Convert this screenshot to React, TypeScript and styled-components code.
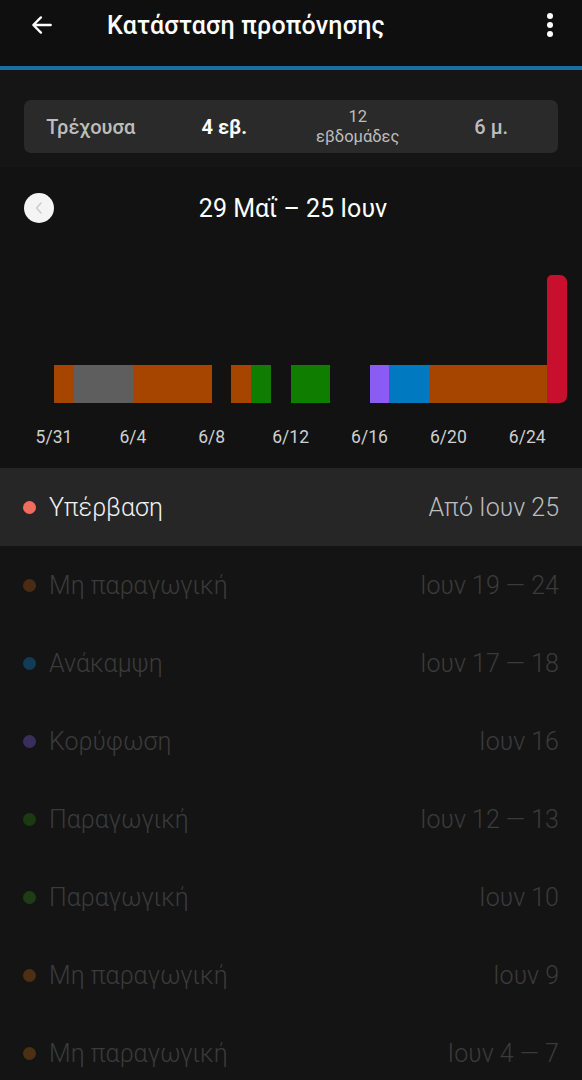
import React from 'react'
import styled, { createGlobalStyle } from 'styled-components'

const GlobalStyle = createGlobalStyle`
  html, body {
    margin: 0;
    padding: 0;
    background: #121212;
    font-family: Roboto, 'Noto Sans', 'DejaVu Sans', sans-serif;
  }
`

const DAY = 19.72

const Page = styled.div`
  width: 582px;
  min-height: 1080px;
  background: #121212;
  overflow: hidden;
`

const Header = styled.header`
  height: 66px;
  box-sizing: border-box;
  display: flex;
  align-items: center;
  background: #0f0f0f;
  padding: 0 16px 16px 26px;
  color: #fff;
`

const AccentLine = styled.div`
  height: 4px;
  background: #1c6da6;
`

const IconButton = styled.div`
  width: 32px;
  height: 32px;
  display: flex;
  align-items: center;
  justify-content: center;
`

const Title = styled.h1`
  flex: 1;
  margin: 0 0 0 49px;
  font-size: 25px;
  font-weight: 500;
  letter-spacing: 0.2px;
`

const RangeSection = styled.section`
  background: #151515;
  padding: 30px 24px 14px;
`

const Segmented = styled.div`
  display: grid;
  grid-template-columns: repeat(4, 1fr);
  height: 53px;
  background: #2a2a2a;
  border-radius: 7px;
`

const Segment = styled.div<{ active?: boolean }>`
  display: flex;
  flex-direction: column;
  align-items: center;
  justify-content: center;
  color: ${(p) => (p.active ? '#ffffff' : '#bdbdbd')};
  font-size: 20px;
  font-weight: ${(p) => (p.active ? 700 : 500)};
  line-height: 1.1;
`

const SmallLine = styled.span`
  font-size: 16.5px;
  font-weight: 400;
  line-height: 1.2;
`

const DateNav = styled.div`
  display: flex;
  align-items: center;
  padding: 26px 24px 0;
  height: 30px;
`

const RoundButton = styled.div`
  width: 30px;
  height: 30px;
  border-radius: 50%;
  background: #f4f4f4;
  display: flex;
  align-items: center;
  justify-content: center;
`

const DateText = styled.div`
  flex: 1;
  text-align: center;
  color: #fff;
  font-size: 25px;
  padding-right: 36px;
  margin-left: 10px;
`

const Chart = styled.div`
  height: 128px;
  margin-top: 52px;
  padding-left: 54px;
  display: flex;
  align-items: flex-end;
`

const Bar = styled.div<{ color: string; days: number; tall?: boolean }>`
  width: ${(p) => p.days * DAY}px;
  height: ${(p) => (p.tall ? 128 : 38)}px;
  background: ${(p) => p.color};
  border-radius: ${(p) => (p.tall ? '5px 7px 7px 0' : '0')};
`

const Axis = styled.div`
  display: grid;
  grid-template-columns: repeat(7, ${DAY * 4}px);
  padding-left: ${54 - DAY * 2}px;
  margin-top: 24px;
  height: 23px;
`

const Tick = styled.div`
  text-align: center;
  color: #cfcfcf;
  font-size: 17.5px;
`

const List = styled.div`
  margin-top: 18px;
`

const Row = styled.div<{ selected?: boolean }>`
  height: 78px;
  display: flex;
  align-items: center;
  padding: 0 23px 0 23px;
  background: ${(p) => (p.selected ? '#262626' : '#141414')};
  color: ${(p) => (p.selected ? '#f2f2f2' : '#3b3b3b')};
  font-size: 25px;
  font-weight: 300;
`

const Dot = styled.span<{ color: string }>`
  width: 13px;
  height: 13px;
  border-radius: 50%;
  background: ${(p) => p.color};
  margin-right: 13px;
  flex-shrink: 0;
`

const Label = styled.span`
  flex: 1;
`

const When = styled.span<{ selected?: boolean }>`
  color: ${(p) => (p.selected ? '#bcbcbc' : '#3b3b3b')};
`

const bars: { color: string; days: number; tall?: boolean }[] = [
  { color: '#a54500', days: 1 },
  { color: '#5e5e5e', days: 3 },
  { color: '#a54500', days: 4 },
  { color: 'transparent', days: 1 },
  { color: '#a54500', days: 1 },
  { color: '#0f7d00', days: 1 },
  { color: 'transparent', days: 1 },
  { color: '#0f7d00', days: 2 },
  { color: 'transparent', days: 2 },
  { color: '#8a5cf5', days: 1 },
  { color: '#0079c1', days: 2 },
  { color: '#a54500', days: 6 },
  { color: '#c8102e', days: 1, tall: true },
]

const ticks = ['5/31', '6/4', '6/8', '6/12', '6/16', '6/20', '6/24']

const rows = [
  { label: 'Υπέρβαση', when: 'Από Ιουν 25', dot: '#f26b5f', selected: true },
  { label: 'Μη παραγωγική', when: 'Ιουν 19 — 24', dot: '#4a2c12' },
  { label: 'Ανάκαμψη', when: 'Ιουν 17 — 18', dot: '#123c55' },
  { label: 'Κορύφωση', when: 'Ιουν 16', dot: '#3a2e5c' },
  { label: 'Παραγωγική', when: 'Ιουν 12 — 13', dot: '#1c3a12' },
  { label: 'Παραγωγική', when: 'Ιουν 10', dot: '#1f3d14' },
  { label: 'Μη παραγωγική', when: 'Ιουν 9', dot: '#4d2f14' },
  { label: 'Μη παραγωγική', when: 'Ιουν 4 — 7', dot: '#4d2f14' },
]

const App: React.FC = () => (
  <Page>
    <GlobalStyle />
    <Header>
      <IconButton>
        <svg width="26" height="26" viewBox="0 0 24 24" fill="none" stroke="#fff" strokeWidth="2.2" strokeLinecap="round" strokeLinejoin="round">
          <path d="M20 12H4.5M11 5l-7 7 7 7" />
        </svg>
      </IconButton>
      <Title>Κατάσταση προπόνησης</Title>
      <IconButton>
        <svg width="8" height="26" viewBox="0 0 8 26">
          <circle cx="4" cy="4" r="3" fill="#fff" />
          <circle cx="4" cy="13" r="3" fill="#fff" />
          <circle cx="4" cy="22" r="3" fill="#fff" />
        </svg>
      </IconButton>
    </Header>
    <AccentLine />

    <RangeSection>
      <Segmented>
        <Segment>Τρέχουσα</Segment>
        <Segment active>4 εβ.</Segment>
        <Segment>
          <SmallLine>12</SmallLine>
          <SmallLine>εβδομάδες</SmallLine>
        </Segment>
        <Segment>6 μ.</Segment>
      </Segmented>
    </RangeSection>

    <DateNav>
      <RoundButton>
        <svg width="12" height="14" viewBox="0 0 12 14" fill="none" stroke="#c9c9c9" strokeWidth="1.4" strokeLinecap="round">
          <path d="M8 2L3.5 7 8 12" />
        </svg>
      </RoundButton>
      <DateText>29 Μαΐ – 25 Ιουν</DateText>
    </DateNav>

    <Chart>
      {bars.map((b, i) => (
        <Bar key={i} color={b.color} days={b.days} tall={b.tall} />
      ))}
    </Chart>
    <Axis>
      {ticks.map((t) => (
        <Tick key={t}>{t}</Tick>
      ))}
    </Axis>

    <List>
      {rows.map((r, i) => (
        <Row key={i} selected={r.selected}>
          <Dot color={r.dot} />
          <Label>{r.label}</Label>
          <When selected={r.selected}>{r.when}</When>
        </Row>
      ))}
    </List>
  </Page>
)

export default App
